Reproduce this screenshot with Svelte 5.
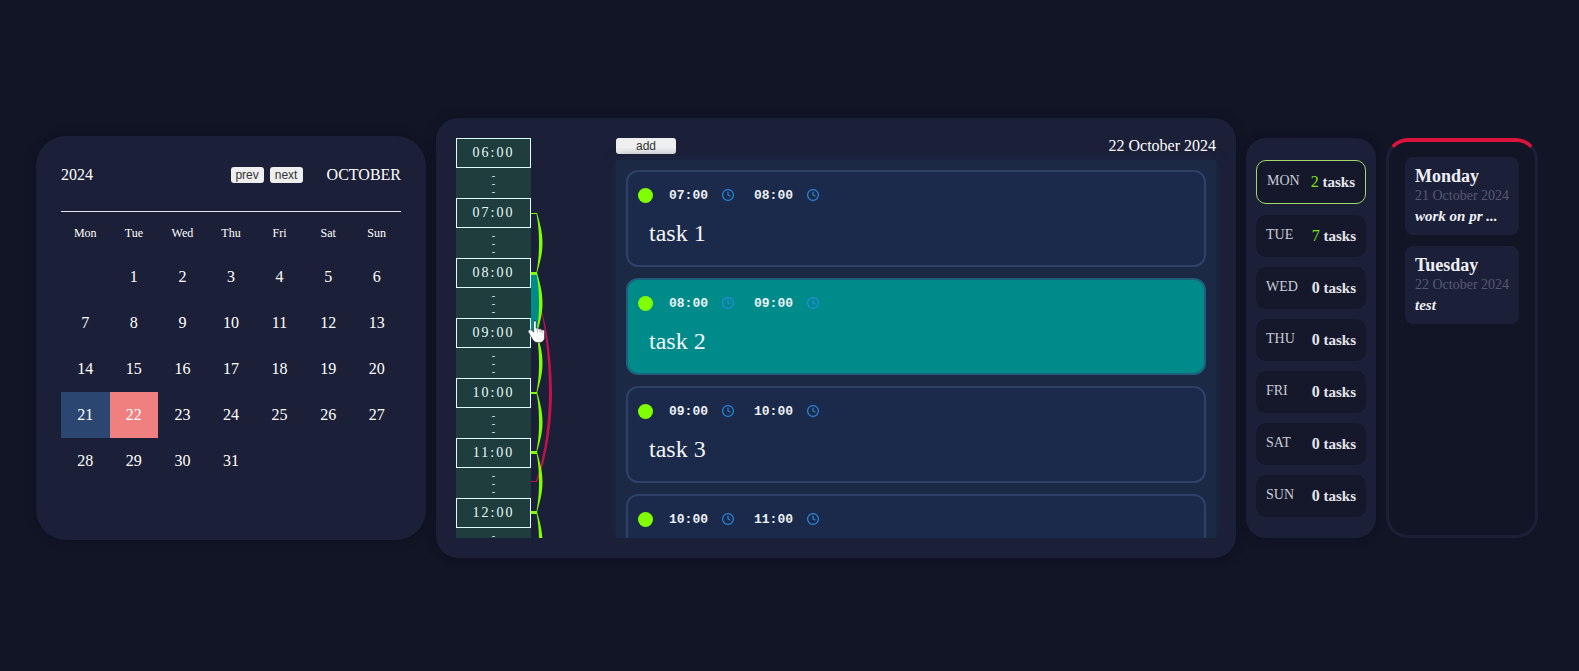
<script>
  const days = ['Mon', 'Tue', 'Wed', 'Thu', 'Fri', 'Sat', 'Sun'];
  const blanks = [null];
  const dates = [...blanks, ...Array.from({ length: 31 }, (_, i) => i + 1)];
  const hours = ['06:00', '07:00', '08:00', '09:00', '10:00', '11:00', '12:00'];
  const tasks = [
    { from: '07:00', to: '08:00', name: 'task 1' },
    { from: '08:00', to: '09:00', name: 'task 2', active: true },
    { from: '09:00', to: '10:00', name: 'task 3' },
    { from: '10:00', to: '11:00', name: 'task 4' }
  ];
  const week = [
    { d: 'MON', n: 2, active: true },
    { d: 'TUE', n: 7 },
    { d: 'WED', n: 0 },
    { d: 'THU', n: 0 },
    { d: 'FRI', n: 0 },
    { d: 'SAT', n: 0 },
    { d: 'SUN', n: 0 }
  ];
  // crescent between two hours, y in px inside the time column
  const arc = (y) =>
    `M75 ${y} L81 ${y} C84.5 ${y + 12} 86.5 ${y + 20} 86.5 ${y + 30} C86.5 ${y + 40} 84.5 ${y + 48} 81 ${y + 60} L75 ${y + 60} L75 ${y + 59} L80.5 ${y + 59} C82.5 ${y + 48} 83 ${y + 40} 83 ${y + 30} C83 ${y + 20} 82.5 ${y + 12} 80.5 ${y + 1} L75 ${y + 1} Z`;
  const arcs = [75, 135, 195, 254, 314, 374];
</script>

{#snippet clock()}
  <svg class="clock" viewBox="0 0 24 24" fill="none" stroke="currentColor" stroke-width="2.4" stroke-linecap="round">
    <circle cx="12" cy="12" r="10.800" />
    <path d="M12 6v6l4 2" />
  </svg>
{/snippet}

<main class="page">
  <section class="cal">
    <header class="cal-head">
      <span>2024</span>
      <div class="cal-right">
        <button class="mini">prev</button>
        <button class="mini">next</button>
        <span class="month">OCTOBER</span>
      </div>
    </header>
    <div class="cal-grid">
      {#each days as d}
        <div class="wd">{d}</div>
      {/each}
      {#each dates as n}
        <div class="day" class:sel={n === 21} class:today={n === 22}>{n ?? ''}</div>
      {/each}
    </div>
  </section>

  <section class="planner">
    <div class="times">
      <div class="time-list">
        {#each hours as h, i}
          <div class="hour">{h}</div>
          <div class="dots">
            <span>-</span>
            {#if i < hours.length - 1}<span>-</span><span>-</span>{/if}
          </div>
        {/each}
      </div>
      <svg class="links" width="110" height="400" viewBox="0 0 110 400">
        <path d="M75 135 L81 135 C84.500 147 86 155 86 165 C86 175 84.500 183 81 195 L75 195 Z" fill="#008b8b" />
        <path d="M84 167 C93 194 96 232 96 255 C96 282 91 322 81 344 L75 344 L75 343 L80 343 C89 317 93 282 93 255 C93 227 90 192 84 167 Z" fill="#c2124a" />
        {#each arcs as y, i}
          <path d={arc(y)} fill="#7fff00" />
          {#if i > 0}<rect x="75" {y} width="6" height="2" fill="#7fff00" />{/if}
        {/each}
      </svg>
      <svg class="hand" width="17" height="23" viewBox="0 0 17 23">
        <path d="M7.500 .5c-1.100 0-1.800.8-1.800 1.800V12L3.600 10.200c-.9-.8-2.200-.7-3 .1-.6.7-.5 1.600 0 2.300L5 20c1.200 1.700 2.800 2.500 4.800 2.500h1.700c3 0 5-2.200 5-5v-6c0-1-.7-1.700-1.600-1.700-.5 0-.9.2-1.200.5-.2-.9-.9-1.500-1.700-1.500-.5 0-.9.2-1.200.5-.3-.8-1-1.300-1.700-1.300-.4 0-.7.1-1 .3V2.300c0-1-.7-1.800-1.800-1.800z" fill="#fff" stroke="#1a1a1a" stroke-width=".5" />
        <path d="M9.300 9v3.500M12 9.500v3M14.300 10.500v2.500" stroke="#888" stroke-width=".6" fill="none" />
      </svg>
    </div>

    <div class="board">
      <div class="board-head">
        <button class="add">add</button>
        <span class="today-label">22 October 2024</span>
      </div>
      <div class="task-list">
        {#each tasks as t}
          <article class="task" class:on={t.active}>
            <div class="task-row">
              <span class="dot"></span>
              <span class="tm">{t.from}</span>
              {@render clock()}
              <span class="tm second">{t.to}</span>
              {@render clock()}
            </div>
            <p class="task-name">{t.name}</p>
          </article>
        {/each}
      </div>
    </div>
  </section>

  <section class="week">
    {#each week as w}
      <div class="wk" class:cur={w.active}>
        <span class="wk-d">{w.d}</span>
        <span class="wk-n"><b class:some={w.n > 0}>{w.n}</b> tasks</span>
      </div>
    {/each}
  </section>

  <section class="notes">
    <div class="note">
      <h4>Monday</h4>
      <div class="note-date">21 October 2024</div>
      <em>work on pr ...</em>
    </div>
    <div class="note">
      <h4>Tuesday</h4>
      <div class="note-date">22 October 2024</div>
      <em>test</em>
    </div>
  </section>
</main>

<style>
  :global(body) {
    margin: 0;
    background: #121526;
    color: #fff;
    font-family: "Liberation Serif", serif;
  }
  .page {
    height: 671px;
    box-sizing: border-box;
    padding: 5px 5px 0 0;
    display: flex;
    align-items: center;
    justify-content: center;
    gap: 10px;
    overflow: hidden;
  }

  /* calendar */
  .cal {
    width: 390px;
    height: 404px;
    box-sizing: border-box;
    padding: 24px 25px;
    background: #1c1f38;
    border-radius: 30px;
    box-shadow: 0 0 10px rgba(10, 12, 24, 0.6);
  }
  .cal-head {
    display: flex;
    justify-content: space-between;
    align-items: center;
    height: 30px;
    margin-bottom: 21px;
    font-size: 16px;
  }
  .cal-right { display: flex; align-items: center; }
  .mini {
    appearance: none;
    border: 0;
    padding: 0;
    width: 33px;
    height: 16px;
    margin-right: 6px;
    background: #efefef;
    color: #333;
    border-radius: 3px;
    font: 12px "Liberation Sans", sans-serif;
  }
  .mini + .mini { margin-right: 0; }
  .month { margin-left: 24px; }
  .cal-grid {
    display: grid;
    grid-template-columns: repeat(7, 1fr);
    grid-auto-rows: 46px;
    grid-template-rows: 42px;
    border-top: 1px solid #e6e6ee;
  }
  .wd, .day { display: flex; align-items: center; justify-content: center; }
  .wd { font-size: 12px; }
  .day { font-size: 16px; }
  .sel { background: #2c4672; }
  .today { background: #f08080; }

  /* timeline + tasks */
  .planner {
    width: 800px;
    height: 440px;
    box-sizing: border-box;
    padding: 20px;
    display: flex;
    background: #1c1f38;
    border-radius: 22px;
    box-shadow: 0 0 10px rgba(10, 12, 24, 0.6);
  }
  .times {
    position: relative;
    flex: none;
    width: 160px;
    height: 400px;
  }
  .time-list {
    width: 75px;
    height: 400px;
    overflow: hidden;
    background: #1f3d3d;
  }
  .hour {
    height: 30px;
    box-sizing: border-box;
    border: 1px solid #dff;
    display: flex;
    align-items: center;
    justify-content: center;
    font-size: 14px;
    letter-spacing: 2px;
    color: #e8fbfb;
  }
  .dots {
    height: 30px;
    box-sizing: border-box;
    padding-top: 4px;
    display: flex;
    flex-direction: column;
    align-items: center;
    font-size: 10px;
    color: #dff;
  }
  .dots span { height: 8px; line-height: 8px; }
  .links { position: absolute; left: 0; top: 0; pointer-events: none; }
  .hand { position: absolute; left: 72px; top: 182px; }

  .board { flex: 1; min-width: 0; height: 400px; display: flex; flex-direction: column; }
  .board-head {
    height: 22px;
    display: flex;
    justify-content: space-between;
    align-items: flex-start;
    font-size: 16px;
  }
  .add {
    appearance: none;
    border: 0;
    padding: 0;
    width: 60px;
    height: 16px;
    background: #efefef;
    color: #333;
    border-radius: 3px;
    font: 12px "Liberation Sans", sans-serif;
  }
  .today-label { line-height: 16px; }
  .task-list {
    flex: 1;
    min-height: 0;
    overflow: hidden;
    padding: 10px;
    background: #1b2945;
    box-shadow: 0 0 12px #1b2945;
    clip-path: inset(-12px -12px 0 -12px);
    display: flex;
    flex-direction: column;
    gap: 11px;
  }
  .task {
    flex: none;
    height: 97px;
    box-sizing: border-box;
    padding: 15px 10px;
    background: #1b2a4b;
    border: 2px solid #2e4169;
    border-radius: 12px;
  }
  .task.on { background: #008b8b; border-color: #1f5f7c; }
  .task-row { display: flex; align-items: center; height: 16px; }
  .dot { width: 15px; height: 15px; border-radius: 50%; background: #7fff00; margin-right: 16px; }
  .tm { font: bold 13px "Liberation Mono", monospace; color: #edf2f7; }
  .second { margin-left: 20px; }
  .clock { width: 12px; height: 12px; margin-left: 14px; color: #2b8ae0; }
  .task-name { margin: 16px 0 0 11px; font-size: 24px; line-height: 28px; color: #f2f4f8; }

  /* week summary */
  .week {
    width: 130px;
    height: 400px;
    box-sizing: border-box;
    padding: 22px 10px 0;
    display: flex;
    flex-direction: column;
    gap: 10px;
    background: #1c1f38;
    border-radius: 20px;
    box-shadow: 0 0 10px rgba(10, 12, 24, 0.6);
  }
  .wk {
    height: 42px;
    flex: none;
    box-sizing: border-box;
    padding: 0 10px;
    display: flex;
    align-items: center;
    justify-content: space-between;
    background: #15182b;
    border-radius: 10px;
  }
  .wk.cur { height: 44px; margin-bottom: 1px; border: 1px solid #a5d86a; }
  .wk-d { font-size: 14px; color: #c9ccd6; margin-top: -2px; }
  .wk-n { font-size: 15px; font-weight: bold; color: #e4e6ee; }
  .wk-n b { font-size: 16px; font-weight: bold; }
  .wk-n b.some { font-weight: normal; color: #7fe01a; }

  /* notes */
  .notes {
    width: 152px;
    height: 400px;
    box-sizing: border-box;
    padding: 15px 16px;
    display: flex;
    flex-direction: column;
    gap: 11px;
    background: #121526;
    border: 3px solid #1c1f38;
    border-top: 4px solid #dc143c;
    border-radius: 22px;
  }
  .note {
    height: 78px;
    box-sizing: border-box;
    padding: 9px 0 0 10px;
    background: #1c1f38;
    border-radius: 8px;
  }
  .note h4 { margin: 0; font-size: 18px; line-height: 20px; color: #eef0f6; }
  .note-date { font-size: 14px; line-height: 19px; color: #565a73; white-space: nowrap; }
  .note em { display: block; font-size: 15px; line-height: 22px; font-weight: bold; color: #eef0f6; white-space: nowrap; }
</style>
